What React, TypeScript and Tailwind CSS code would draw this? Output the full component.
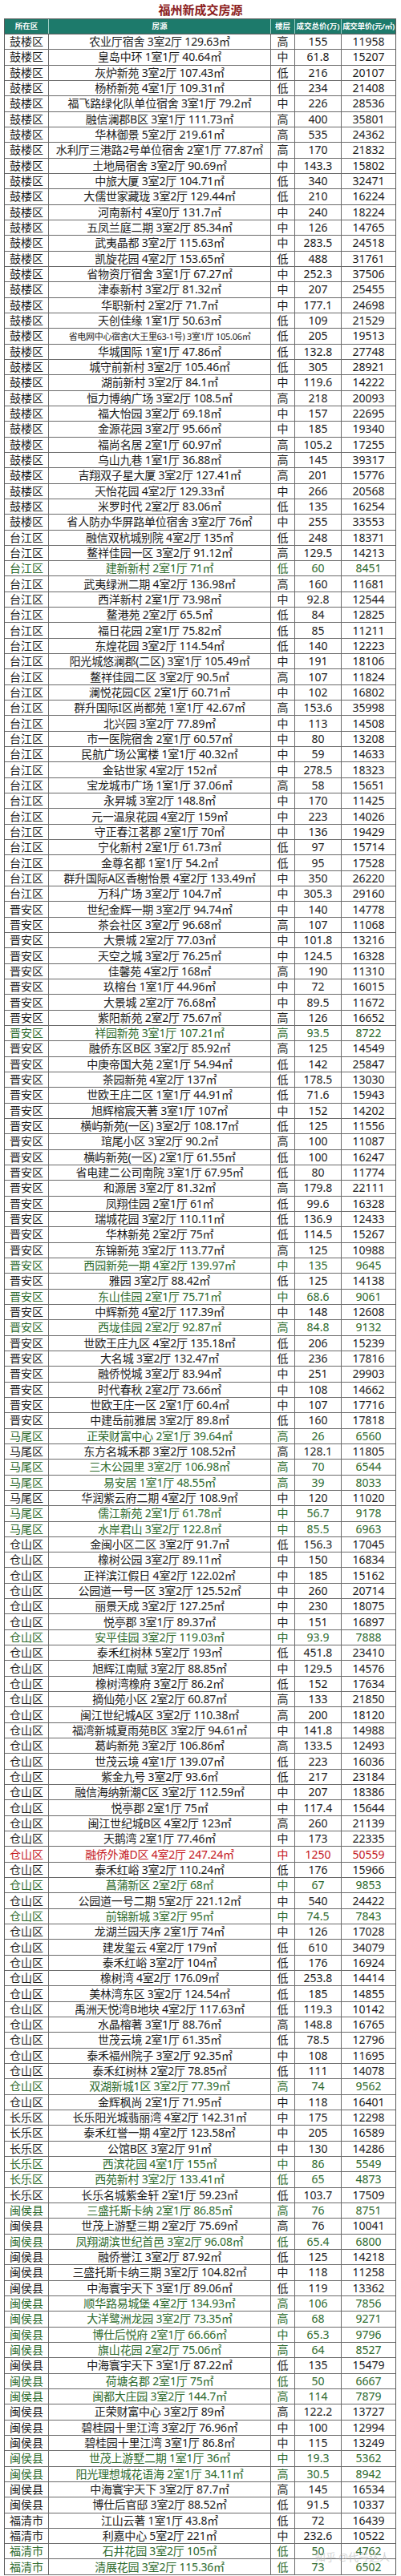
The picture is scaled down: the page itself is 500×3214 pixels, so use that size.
import React from "react";

const RAW = `鼓楼区|农业厅宿舍 3室2厅 129.63㎡|高|155|11958|
鼓楼区|皇岛中环 1室1厅 40.64㎡|中|61.8|15207|
鼓楼区|灰炉新苑 3室2厅 107.43㎡|低|216|20107|
鼓楼区|杨桥新苑 4室1厅 109.31㎡|低|234|21408|
鼓楼区|福飞路绿化队单位宿舍 3室1厅 79.2㎡|中|226|28536|
鼓楼区|融信澜郡B区 3室1厅 111.73㎡|高|400|35801|
鼓楼区|华林御景 5室2厅 219.61㎡|高|535|24362|
鼓楼区|水利厅三港路2号单位宿舍 2室1厅 77.87㎡|高|170|21832|
鼓楼区|土地局宿舍 3室2厅 90.69㎡|中|143.3|15802|
鼓楼区|中旅大厦 3室2厅 104.71㎡|低|340|32471|
鼓楼区|大儒世家藏珑 3室2厅 129.44㎡|低|210|16224|
鼓楼区|河南新村 4室0厅 131.7㎡|中|240|18224|
鼓楼区|五凤兰庭二期 3室2厅 85.34㎡|中|126|14765|
鼓楼区|武夷晶都 3室2厅 115.63㎡|中|283.5|24518|
鼓楼区|凯旋花园 4室2厅 153.65㎡|低|488|31761|
鼓楼区|省物资厅宿舍 3室1厅 67.27㎡|中|252.3|37506|
鼓楼区|津泰新村 3室2厅 81.32㎡|中|207|25455|
鼓楼区|华职新村 2室2厅 71.7㎡|中|177.1|24698|
鼓楼区|天创佳缘 1室1厅 50.63㎡|低|109|21529|
鼓楼区|省电网中心宿舍(大王里63-1号) 3室1厅 105.06㎡|低|205|19513|s
鼓楼区|华城国际 1室1厅 47.86㎡|低|132.8|27748|
鼓楼区|城守前新村 3室2厅 105.46㎡|低|305|28921|
鼓楼区|湖前新村 3室2厅 84.1㎡|中|119.6|14222|
鼓楼区|恒力博纳广场 3室2厅 108.5㎡|高|218|20093|
鼓楼区|福大怡园 3室2厅 69.18㎡|中|157|22695|
鼓楼区|金源花园 3室2厅 95.66㎡|中|185|19340|
鼓楼区|福尚名居 2室1厅 60.97㎡|高|105.2|17255|
鼓楼区|乌山九巷 1室1厅 36.88㎡|高|145|39317|
鼓楼区|吉翔双子星大厦 3室2厅 127.41㎡|高|201|15776|
鼓楼区|天怡花园 4室2厅 129.33㎡|中|266|20568|
鼓楼区|米罗时代 2室2厅 83.06㎡|低|135|16254|
鼓楼区|省人防办华屏路单位宿舍 3室2厅 76㎡|中|255|33553|
台江区|融信双杭城别院 4室2厅 135㎡|低|248|18371|
台江区|鳌祥佳园一区 3室2厅 91.12㎡|高|129.5|14213|
台江区|建新新村 2室1厅 71㎡|低|60|8451|g
台江区|武夷绿洲二期 4室2厅 136.98㎡|高|160|11681|
台江区|西洋新村 2室1厅 73.98㎡|中|92.8|12544|
台江区|鳌港苑 2室2厅 65.5㎡|低|84|12825|
台江区|福日花园 2室1厅 75.82㎡|低|85|11211|
台江区|东煌花园 3室2厅 114.54㎡|低|140|12223|
台江区|阳光城悠澜郡(二区) 3室1厅 105.49㎡|中|191|18106|
台江区|鳌祥佳园二区 3室2厅 90.5㎡|高|107|11824|
台江区|澜悦花园C区 2室1厅 60.71㎡|中|102|16802|
台江区|群升国际I区尚都苑 1室1厅 42.67㎡|高|153.6|35998|
台江区|北兴园 3室2厅 77.89㎡|中|113|14508|
台江区|市一医院宿舍 2室1厅 60.57㎡|中|80|13208|
台江区|民航广场公寓楼 1室1厅 40.32㎡|中|59|14633|
台江区|金钻世家 4室2厅 152㎡|中|278.5|18323|
台江区|宝龙城市广场 1室1厅 37.06㎡|高|58|15651|
台江区|永昇城 3室2厅 148.8㎡|中|170|11425|
台江区|元一温泉花园 4室2厅 159㎡|中|223|14026|
台江区|守正春江茗郡 2室1厅 70㎡|中|136|19429|
台江区|宁化新村 2室1厅 61.73㎡|低|97|15714|
台江区|金尊名都 1室1厅 54.2㎡|低|95|17528|
台江区|群升国际A区香榭怡景 4室2厅 133.49㎡|中|350|26220|
台江区|万科广场 3室2厅 104.7㎡|中|305.3|29160|
晋安区|世纪金辉一期 3室2厅 94.74㎡|中|140|14778|
晋安区|茶会社区 3室2厅 96.68㎡|高|107|11068|
晋安区|大景城 2室2厅 77.03㎡|中|101.8|13216|
晋安区|天空之城 3室2厅 76.25㎡|中|124.5|16328|
晋安区|佳馨苑 4室2厅 168㎡|高|190|11310|
晋安区|玖榕台 1室1厅 44.96㎡|中|72|16015|
晋安区|大景城 2室2厅 76.68㎡|中|89.5|11672|
晋安区|紫阳新苑 2室2厅 75.67㎡|高|126|16652|
晋安区|祥园新苑 3室1厅 107.21㎡|高|93.5|8722|g
晋安区|融侨东区B区 3室2厅 85.92㎡|高|125|14549|
晋安区|中庚帝国大苑 2室1厅 54.94㎡|低|142|25847|
晋安区|茶园新苑 4室2厅 137㎡|低|178.5|13030|
晋安区|世欧王庄二区 1室1厅 44.91㎡|低|71.6|15943|
晋安区|旭辉榕宸天著 3室1厅 107㎡|中|152|14202|
晋安区|横屿新苑(一区) 3室2厅 108.17㎡|低|125|11556|
晋安区|琯尾小区 3室2厅 90.2㎡|高|100|11087|
晋安区|横屿新苑(一区) 2室1厅 61.55㎡|低|100|16247|
晋安区|省电建二公司南院 3室1厅 67.95㎡|低|80|11774|
晋安区|和源居 3室2厅 81.32㎡|高|179.8|22111|
晋安区|凤翔佳园 2室1厅 61㎡|低|99.6|16328|
晋安区|瑞城花园 3室2厅 110.11㎡|低|136.9|12433|
晋安区|华林新苑 2室2厅 75㎡|低|114.5|15267|
晋安区|东锦新苑 3室2厅 113.77㎡|高|125|10988|
晋安区|西园新苑一期 4室2厅 139.97㎡|中|135|9645|g
晋安区|雅园 3室2厅 88.42㎡|低|125|14138|
晋安区|东山佳园 2室1厅 75.71㎡|中|68.6|9061|g
晋安区|中辉新苑 4室2厅 117.39㎡|中|148|12608|
晋安区|西垅佳园 2室2厅 92.87㎡|高|84.8|9132|g
晋安区|世欧王庄九区 4室2厅 135.18㎡|低|206|15239|
晋安区|大名城 3室2厅 132.47㎡|低|236|17816|
晋安区|融侨悦城 3室2厅 83.94㎡|中|251|29903|
晋安区|时代春秋 2室2厅 73.66㎡|中|108|14662|
晋安区|世欧王庄一区 2室1厅 60.4㎡|中|107|17716|
晋安区|中建岳前雅居 3室2厅 89.8㎡|低|160|17818|
马尾区|正荣财富中心 2室1厅 39.64㎡|高|26|6560|g
马尾区|东方名城禾郡 3室2厅 108.52㎡|高|128.1|11805|
马尾区|三木公园里 3室2厅 106.98㎡|高|70|6544|g
马尾区|易安居 1室1厅 48.55㎡|高|39|8033|g
马尾区|华润紫云府二期 4室2厅 108.9㎡|中|120|11020|
马尾区|儒江新苑 2室1厅 61.78㎡|中|56.7|9178|g
马尾区|水岸君山 3室2厅 122.8㎡|中|85.5|6963|g
仓山区|金闽小区二区 3室2厅 91.7㎡|低|156.3|17045|
仓山区|橡树公园 3室2厅 89.11㎡|中|150|16834|
仓山区|正祥滨江假日 4室2厅 122.02㎡|中|185|15162|
仓山区|公园道一号一区 3室2厅 125.52㎡|中|260|20714|
仓山区|丽景天成 3室2厅 127.25㎡|中|230|18075|
仓山区|悦亭郡 3室1厅 89.37㎡|中|151|16897|
仓山区|安平佳园 3室2厅 119.03㎡|中|93.9|7888|g
仓山区|泰禾红树林 5室2厅 193㎡|低|451.8|23410|
仓山区|旭辉江南赋 3室2厅 88.85㎡|中|129.5|14576|
仓山区|橡树湾橡府 3室2厅 86.2㎡|低|152|17634|
仓山区|摘仙苑小区 2室2厅 60.87㎡|高|133|21850|
仓山区|闽江世纪城A区 3室2厅 110.38㎡|高|200|18120|
仓山区|福湾新城夏雨苑B区 3室2厅 94.61㎡|中|141.8|14988|
仓山区|葛屿新苑 3室2厅 106.86㎡|高|133.5|12493|
仓山区|世茂云境 4室1厅 139.07㎡|低|223|16036|
仓山区|紫金九号 3室2厅 93.6㎡|低|217|23184|
仓山区|融信海纳新潮C区 3室2厅 112.59㎡|中|207|18386|
仓山区|悦亭郡 2室1厅 75㎡|中|117.4|15644|
仓山区|闽江世纪城B区 4室2厅 123㎡|高|260|21139|
仓山区|天鹅湾 2室1厅 77.46㎡|中|173|22335|
仓山区|融侨外滩D区 4室2厅 247.24㎡|中|1250|50559|r
仓山区|泰禾红峪 3室2厅 110.24㎡|低|176|15966|
仓山区|菖蒲新区 2室2厅 68㎡|中|67|9853|g
仓山区|公园道一号二期 5室2厅 221.12㎡|中|540|24422|
仓山区|前锦新城 3室2厅 95㎡|中|74.5|7843|g
仓山区|龙湖兰园天序 2室1厅 74㎡|中|126|17028|
仓山区|建发玺云 4室2厅 179㎡|低|610|34079|
仓山区|泰禾红峪 3室2厅 104㎡|低|176|16924|
仓山区|橡树湾 4室2厅 176.09㎡|低|253.8|14414|
仓山区|美林湾东区 3室2厅 124.54㎡|低|185|14855|
仓山区|禹洲天悦湾B地块 4室2厅 117.63㎡|低|119.3|10142|
仓山区|水晶榕著 3室1厅 88.76㎡|高|148.8|16765|
仓山区|世茂云境 2室1厅 61.35㎡|低|78.5|12796|
仓山区|泰禾福州院子 3室2厅 92.35㎡|中|108|11695|
仓山区|泰禾红树林 2室2厅 78.85㎡|低|111|14078|
仓山区|双湖新城1区 3室2厅 77.39㎡|高|74|9562|g
仓山区|金辉枫尚 2室1厅 71.95㎡|中|118|16401|
长乐区|长乐阳光城翡丽湾 4室2厅 142.31㎡|中|175|12298|
长乐区|泰禾红誉一期 4室2厅 123.58㎡|中|205|16589|
长乐区|公馆B区 3室2厅 91㎡|中|130|14286|
长乐区|西滨花园 4室1厅 155㎡|中|86|5549|g
长乐区|西苑新村 3室2厅 133.41㎡|低|65|4873|g
长乐区|长乐名城紫金轩 2室1厅 59.23㎡|低|103.7|17509|
闽侯县|三盛托斯卡纳 2室1厅 86.85㎡|高|76|8751|g
闽侯县|世茂上游墅三期 2室2厅 75.69㎡|高|76|10041|
闽侯县|凤翔湖滨世纪首邑 3室2厅 96.08㎡|低|65.4|6800|g
闽侯县|融侨誉江 3室2厅 87.92㎡|低|125|14218|
闽侯县|三盛托斯卡纳三期 3室2厅 104.82㎡|中|118|11258|
闽侯县|中海寰宇天下 3室1厅 89.06㎡|低|119|13362|
闽侯县|顺华路易城堡 4室2厅 134.93㎡|高|106|7856|g
闽侯县|大洋鹭洲龙园 3室2厅 73.35㎡|高|68|9271|g
闽侯县|博仕后悦府 2室1厅 66.66㎡|中|65.3|9796|g
闽侯县|旗山花园 2室2厅 75.06㎡|高|64|8527|g
闽侯县|中海寰宇天下 3室1厅 87.22㎡|低|135|15479|
闽侯县|荷塘名郡 2室1厅 75㎡|低|50|6667|g
闽侯县|闽都大庄园 3室2厅 144.7㎡|高|114|7879|g
闽侯县|正荣财富中心 3室2厅 89㎡|高|122.2|13727|
闽侯县|碧桂园十里江湾 3室2厅 76.96㎡|中|100|12994|
闽侯县|碧桂园十里江湾 3室1厅 86.8㎡|中|115|13249|
闽侯县|世茂上游墅二期 1室1厅 36㎡|中|19.3|5362|g
闽侯县|阳光理想城花语海 2室1厅 34.11㎡|高|30.5|8942|g
闽侯县|中海寰宇天下 3室2厅 87.7㎡|高|145|16534|
闽侯县|博仕后官邸 3室2厅 88.52㎡|低|91.5|10337|
福清市|江山云著 1室1厅 43.8㎡|低|72|16439|
福清市|利嘉中心 5室2厅 221㎡|中|232.6|10522|
福清市|石井花园 3室2厅 105㎡|低|50|4762|g
福清市|清展花园 3室2厅 115.36㎡|低|73|6502|g`;

type Row = { d: string; n: string; f: string; t: string; u: string; flag: string };

const rows: Row[] = RAW.split("\n").map((line) => {
  const [d, n, f, t, u, flag] = line.split("|");
  return { d, n, f, t, u, flag: flag || "" };
});

const colorClass: Record<string, string> = {
  "": "text-[#1c1c1c]",
  g: "text-[#2d6a2d]",
  r: "text-[#c4161c]",
  s: "text-[#1c1c1c]",
};

const FONT = { fontFamily: '"Noto Sans", "Noto Sans CJK SC", sans-serif' };

export default function App() {
  return (
    <div className="relative w-[500px] h-[3214px] bg-white" style={FONT}>
      <div className="h-[23px] flex items-center justify-center">
        <span
          className="text-[15px] font-bold leading-none text-[#8c1c1c] tracking-[0px]"
          style={{ fontFamily: '"Noto Sans CJK SC", sans-serif' }}
        >
          福州新成交房源
        </span>
      </div>
      <div className="ml-[5px] w-[489px] border-l border-r border-[#5a5a5a]">
        <div className="grid grid-cols-[55px_277px_30px_58px_67px] h-[20px] bg-[#1d7a6b] text-white text-[9.5px] font-bold leading-none border-t border-b border-[#5a5a5a]">
          <div className="flex items-center justify-center border-r border-[#9fd0c6]">所在区</div>
          <div className="flex items-center justify-center border-r border-[#9fd0c6]">房源</div>
          <div className="flex items-center justify-center border-r border-[#9fd0c6]">楼层</div>
          <div className="flex items-center justify-center border-r border-[#9fd0c6] whitespace-nowrap">成交总价(万)</div>
          <div className="flex items-center justify-center whitespace-nowrap tracking-[-0.3px]">成交单价(元/㎡)</div>
        </div>
        {rows.map((r, i) => (
          <div
            key={i}
            className={`grid grid-cols-[55px_277px_30px_58px_67px] h-[19.33px] border-b border-[#6a6a6a] leading-none whitespace-nowrap ${colorClass[r.flag]}`}
          >
            <div className="flex items-center justify-center border-r border-[#6a6a6a] text-[14px]">{r.d}</div>
            <div
              className={`flex items-center justify-center border-r border-[#6a6a6a] overflow-hidden ${
                r.flag === "s" ? "text-[11px] tracking-[-0.3px]" : "text-[14px] tracking-[-0.2px]"
              }`}
            >
              {r.n}
            </div>
            <div className="flex items-center justify-center border-r border-[#6a6a6a] text-[14px]">{r.f}</div>
            <div className="flex items-center justify-center border-r border-[#6a6a6a] text-[14px]">{r.t}</div>
            <div className="flex items-center justify-center text-[14px]">{r.u}</div>
          </div>
        ))}
      </div>
      <div className="absolute right-[14px] top-[3181px] text-[13px] text-[#b8b8b8] opacity-60 pointer-events-none">
        知乎 @代号达人
      </div>
    </div>
  );
}
